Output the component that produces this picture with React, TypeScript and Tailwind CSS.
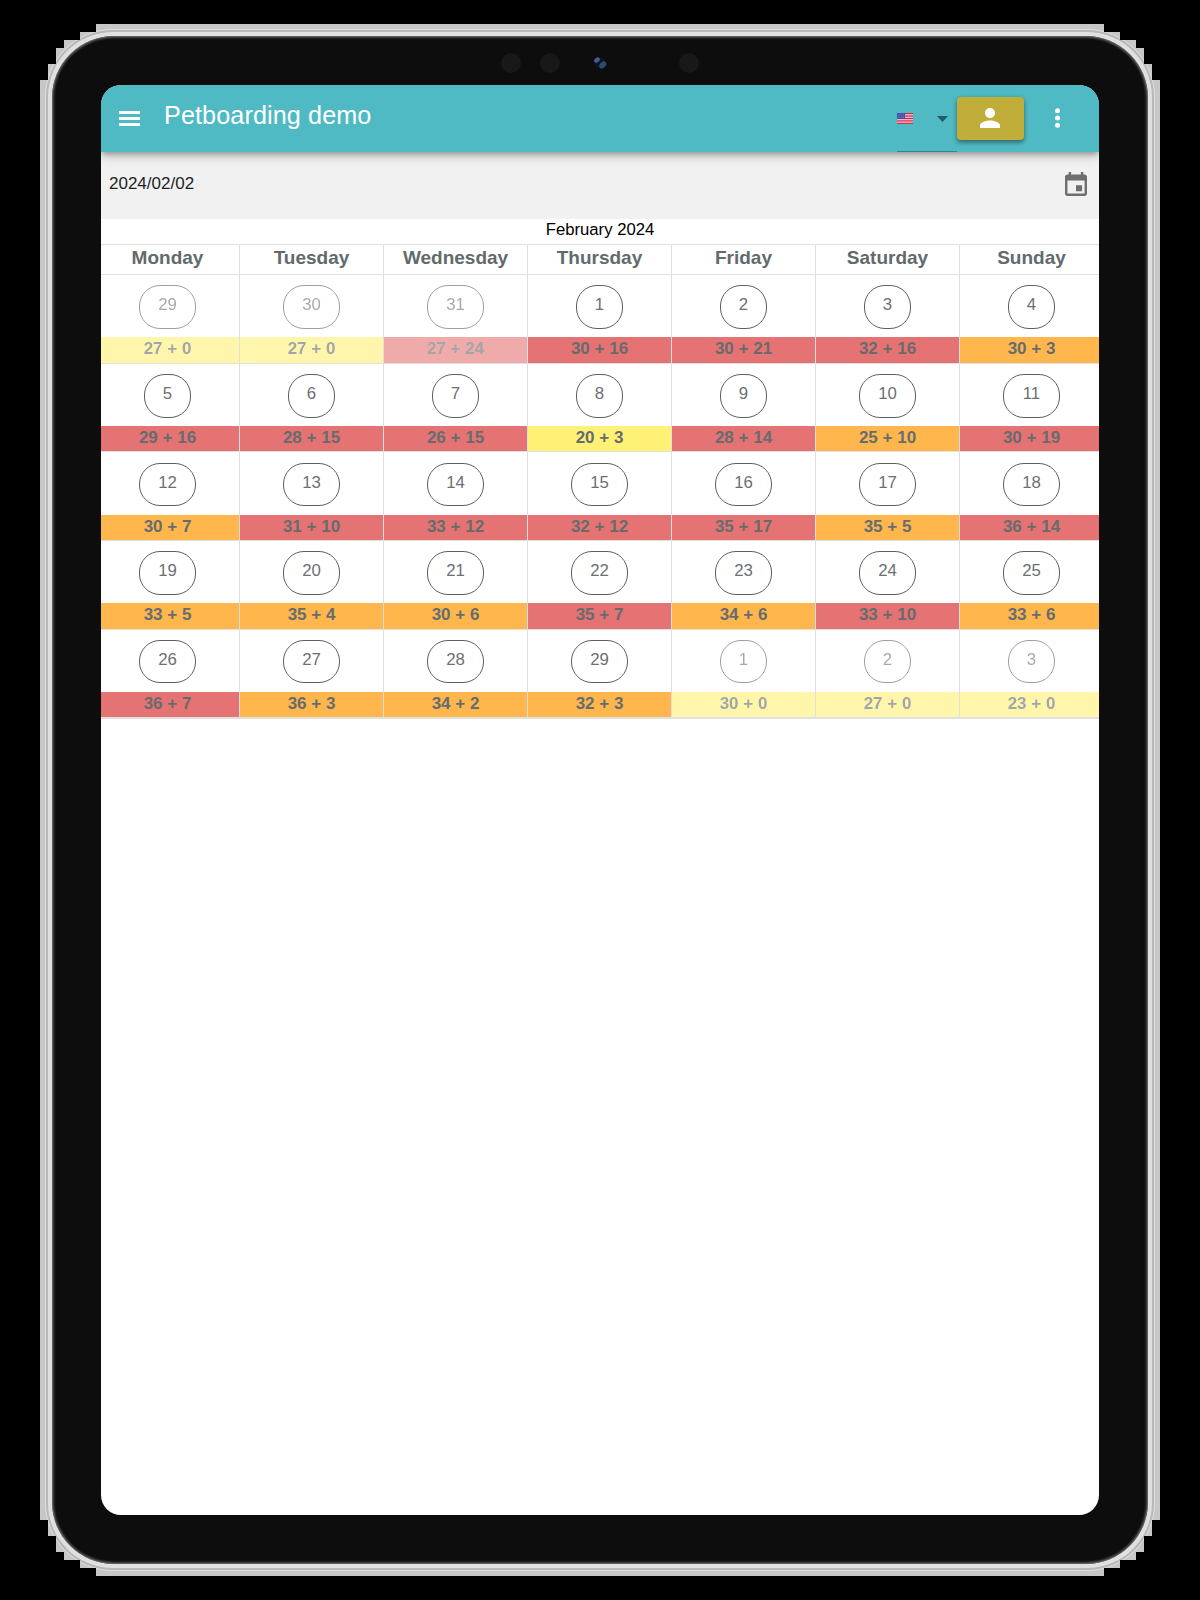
type Tone = 'red' | 'orange' | 'yellow';
type Day = { day: number; load: string; tone: Tone; outside?: boolean };

const tones: Record<Tone, string> = {
  red: 'bg-[#e57373]',
  orange: 'bg-[#ffb74d]',
  yellow: 'bg-[#fff176]',
};

const weekdays = ['Monday', 'Tuesday', 'Wednesday', 'Thursday', 'Friday', 'Saturday', 'Sunday'];

const d = (day: number, load: string, tone: Tone, outside = false): Day => ({ day, load, tone, outside });

const weeks: Day[][] = [
  [d(29, '27 + 0', 'yellow', true), d(30, '27 + 0', 'yellow', true), d(31, '27 + 24', 'red', true), d(1, '30 + 16', 'red'), d(2, '30 + 21', 'red'), d(3, '32 + 16', 'red'), d(4, '30 + 3', 'orange')],
  [d(5, '29 + 16', 'red'), d(6, '28 + 15', 'red'), d(7, '26 + 15', 'red'), d(8, '20 + 3', 'yellow'), d(9, '28 + 14', 'red'), d(10, '25 + 10', 'orange'), d(11, '30 + 19', 'red')],
  [d(12, '30 + 7', 'orange'), d(13, '31 + 10', 'red'), d(14, '33 + 12', 'red'), d(15, '32 + 12', 'red'), d(16, '35 + 17', 'red'), d(17, '35 + 5', 'orange'), d(18, '36 + 14', 'red')],
  [d(19, '33 + 5', 'orange'), d(20, '35 + 4', 'orange'), d(21, '30 + 6', 'orange'), d(22, '35 + 7', 'red'), d(23, '34 + 6', 'orange'), d(24, '33 + 10', 'red'), d(25, '33 + 6', 'orange')],
  [d(26, '36 + 7', 'red'), d(27, '36 + 3', 'orange'), d(28, '34 + 2', 'orange'), d(29, '32 + 3', 'orange'), d(1, '30 + 0', 'yellow', true), d(2, '27 + 0', 'yellow', true), d(3, '23 + 0', 'yellow', true)],
];

function Flag() {
  return (
    <svg className="h-[11px] w-4" viewBox="0 0 16 11">
      <rect width="16" height="11" fill="#f4f1f5" />
      {[0, 1, 2, 3, 4, 5, 6].map((i) => (
        <rect key={i} y={i * 1.69} width="16" height="0.9" fill="#d0103a" />
      ))}
      <rect width="8" height="6" fill="#3f51a3" />
      {[1.1, 2.9, 4.7].map((y) =>
        [1.2, 3, 4.8, 6.6].map((x) => <circle key={`${x}-${y}`} cx={x} cy={y} r="0.38" fill="#b9c0e6" />),
      )}
    </svg>
  );
}

function AppBar() {
  return (
    <header className="relative z-10 flex h-[67px] shrink-0 items-center bg-[#4fbac4] shadow-[0_3px_5px_-1px_rgba(0,0,0,0.25),0_5px_10px_rgba(0,0,0,0.18)]">
      <svg className="ml-[18px] h-[15px] w-[21px] fill-white" viewBox="0 0 21 15">
        <path d="M0 0h21v2.9H0zM0 6h21v2.9H0zM0 12.1h21V15H0z" />
      </svg>
      <h1 className="mb-[7px] ml-[24px] text-[25.2px] leading-8 tracking-[0.1px] text-white">Petboarding demo</h1>
      <div className="ml-auto flex h-full w-[60px] items-center justify-between border-b border-[#2f8790] pr-[9px]">
        <Flag />
        <svg className="mt-px h-[6px] w-[11px] fill-[#245a60]" viewBox="0 0 11 6">
          <path d="M0 0h11L5.5 6z" />
        </svg>
      </div>
      <button className="flex h-[43px] w-[67px] items-center justify-center rounded-[4px] bg-[#c1ae3a] pr-[1px] pb-px shadow-[0_3px_4px_rgba(0,0,0,0.3),0_1px_5px_rgba(0,0,0,0.2)]">
        <svg className="h-5 w-5 fill-white" viewBox="4 4 16 16">
          <path d="M12 12c2.21 0 4-1.79 4-4s-1.79-4-4-4-4 1.79-4 4 1.79 4 4 4zm0 2c-2.67 0-8 1.34-8 4v2h16v-2c0-2.66-5.33-4-8-4z" />
        </svg>
      </button>
      <svg className="mr-[39.5px] mb-[1px] ml-[30.5px] h-5 w-[5px] fill-white" viewBox="0 0 5 20">
        <circle cx="2.5" cy="2.8" r="2.5" />
        <circle cx="2.5" cy="10" r="2.5" />
        <circle cx="2.5" cy="17.2" r="2.5" />
      </svg>
    </header>
  );
}

function DateField() {
  return (
    <div className="flex h-[66.6px] shrink-0 items-start justify-between bg-[#f1f1f1] pr-3 pl-2">
      <span className="mt-[20px] text-[17px] leading-6 text-[#1f1f1f]">2024/02/02</span>
      <svg className="mt-5 h-6 w-[22px] fill-[#6f6f6f]" viewBox="3 1 18 20" preserveAspectRatio="none">
        <path d="M17 12h-5v5h5v-5zM16 1v2H8V1H6v2H5c-1.11 0-1.99.9-1.99 2L3 19c0 1.1.89 2 2 2h14c1.1 0 2-.9 2-2V5c0-1.1-.9-2-2-2h-1V1h-2zm3 18H5V8h14v11z" />
      </svg>
    </div>
  );
}

function DayCell({ cell }: { cell: Day }) {
  return (
    <div className="flex h-[88.67px] flex-col border-r border-b border-[#e0e0e0]">
      <div className={`flex flex-1 flex-col items-center justify-between pt-[10.3px] ${cell.outside ? 'opacity-60' : ''}`}>
        <span className="flex h-[43.4px] justify-center rounded-[21px] border border-[#5c6062] px-[18.3px] text-[16.8px] leading-[38.6px] text-[#6c7072]">
          {cell.day}
        </span>
        <span className={`h-[25.4px] w-full text-center text-[17px] leading-[23.4px] font-bold text-[#666c6e] ${tones[cell.tone]}`}>
          {cell.load}
        </span>
      </div>
    </div>
  );
}

function Calendar() {
  return (
    <section className="-ml-[5px] w-[1008px]">
      <div className="h-[25.7px] text-center text-[16.7px] leading-[22.4px] text-black">February 2024</div>
      <div className="grid grid-cols-7 border-t border-[#e0e0e0]">
        {weekdays.map((name) => (
          <div key={name} className="h-[29.9px] border-r border-b border-[#e0e0e0] text-center text-[19px] leading-[26px] font-bold text-[#626a6c]">
            {name}
          </div>
        ))}
        {weeks.flat().map((cell, i) => (
          <DayCell key={i} cell={cell} />
        ))}
      </div>
      <div className="h-px bg-[#e0e0e0]" />
    </section>
  );
}

/* Metal rim, bezel and camera row of the tablet. */
function TabletFrame({ children }: { children: React.ReactNode }) {
  return (
    <div className="h-[1552px] w-[1120px] bg-[#c6c8c7] p-[5px] [clip-path:polygon(56px_0,56px_8px,40px_8px,40px_16px,24px_16px,24px_24px,16px_24px,16px_40px,8px_40px,8px_56px,0_56px,0_1496px,8px_1496px,8px_1512px,16px_1512px,16px_1528px,24px_1528px,24px_1536px,40px_1536px,40px_1544px,56px_1544px,56px_1552px,1064px_1552px,1064px_1544px,1080px_1544px,1080px_1536px,1096px_1536px,1096px_1528px,1104px_1528px,1104px_1512px,1112px_1512px,1112px_1496px,1120px_1496px,1120px_56px,1112px_56px,1112px_40px,1104px_40px,1104px_24px,1096px_24px,1096px_16px,1080px_16px,1080px_8px,1064px_8px,1064px_0)]">
      <div className="h-full rounded-[68px] border border-[#dedede] bg-[#b9b9b9] p-[2px]">
        <div className="h-full rounded-[65px] bg-[#e0e0e0] p-[4px]">
          <div className="flex h-full flex-col items-center rounded-[62px] bg-[#0d0d0d] shadow-[inset_0_0_3px_1px_#8a8a8a]">
            <div className="relative h-[49px] w-full shrink-0">
              <div className="absolute top-[17px] left-[449px] size-5 rounded-full bg-[#181818]" />
              <div className="absolute top-[17px] left-[488px] size-5 rounded-full bg-[#181818]" />
              <div className="absolute top-[17px] left-[627px] size-5 rounded-full bg-[#181818]" />
              <svg className="absolute top-[20px] left-[541px] size-[14px] blur-[0.7px]" viewBox="0 0 14 14">
                <circle cx="7" cy="7" r="6" fill="#0b1520" />
                <ellipse cx="4" cy="4" rx="3.2" ry="2.3" fill="#46599a" transform="rotate(-40 4 4)" />
                <ellipse cx="9.7" cy="9" rx="4" ry="2.8" fill="#2c4a70" transform="rotate(-45 9.7 9)" />
              </svg>
            </div>
            {children}
          </div>
        </div>
      </div>
    </div>
  );
}

export default function App() {
  return (
    <main className="flex h-[1600px] w-[1200px] items-center justify-center bg-black font-['Liberation_Sans',Arial,sans-serif]">
      <TabletFrame>
        <div className="flex h-[1430px] w-[998px] flex-col overflow-hidden rounded-[20px] bg-white">
          <AppBar />
          <DateField />
          <Calendar />
        </div>
      </TabletFrame>
    </main>
  );
}
